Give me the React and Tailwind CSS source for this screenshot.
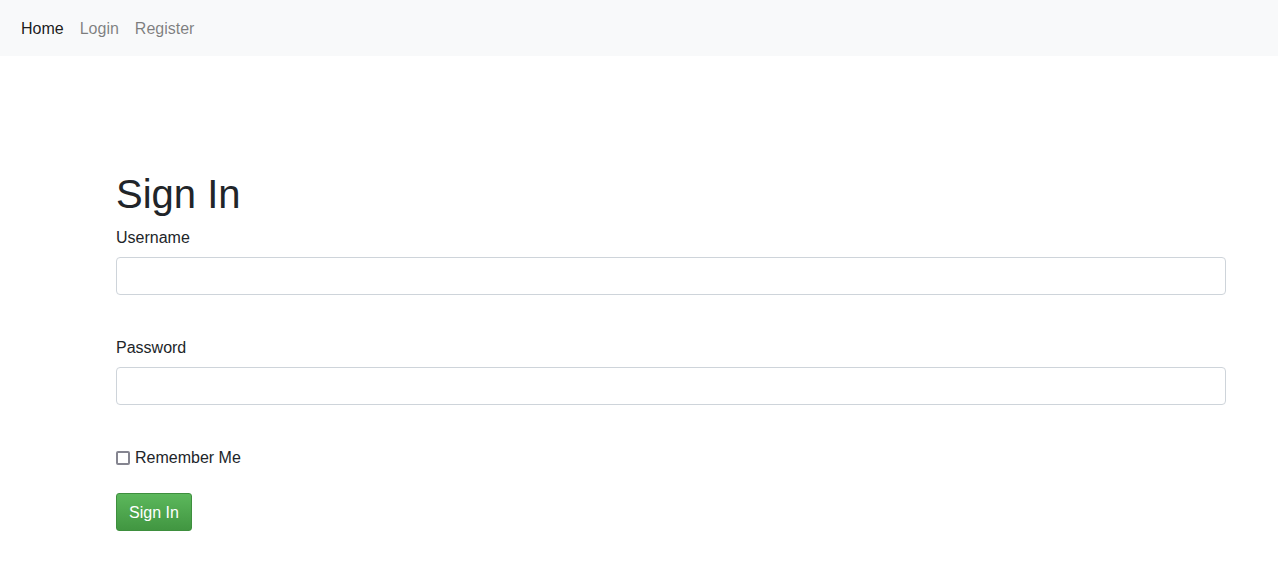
import React, { useState } from 'react';

const App = () => {
  const [username, setUsername] = useState('');
  const [password, setPassword] = useState('');
  const [remember, setRemember] = useState(false);

  return (
    <div className="min-h-screen bg-white text-[#212529] font-['Liberation_Sans',Arial,sans-serif]">
      <nav className="h-14 bg-[#f8f9fa] flex items-center px-4">
        <ul className="flex items-center pt-[2px]">
          <li><a href="#" className="block px-[5px] py-2 leading-6 text-base text-black/90">Home</a></li>
          <li><a href="#" className="block px-2 py-2 leading-6 text-base text-black/50 ml-[3px]">Login</a></li>
          <li><a href="#" className="block px-2 py-2 leading-6 text-base text-black/50">Register</a></li>
        </ul>
      </nav>

      <div className="pl-[116px] pr-[52px] pt-[114px]">
        <h1 className="text-[40px] leading-[48px] font-normal mb-[7px]">Sign In</h1>
        <form onSubmit={(e) => e.preventDefault()}>
          <div className="mb-10">
            <label className="block text-base leading-6 pt-px mb-[7px]">Username</label>
            <input
              type="text"
              value={username}
              onChange={(e) => setUsername(e.target.value)}
              className="block w-full h-[38px] px-3 border border-[#ced4da] rounded bg-white text-base outline-none"
            />
          </div>
          <div className="mb-10">
            <label className="block text-base leading-6 pt-px mb-[7px]">Password</label>
            <input
              type="password"
              value={password}
              onChange={(e) => setPassword(e.target.value)}
              className="block w-full h-[38px] px-3 border border-[#ced4da] rounded bg-white text-base outline-none"
            />
          </div>
          <div className="flex items-center h-6 mb-6">
            <input
              type="checkbox"
              checked={remember}
              onChange={(e) => setRemember(e.target.checked)}
              className="appearance-none m-0 w-[14px] h-[14px] mr-[5px] mt-[2px] border-2 border-[#858590] rounded-[2px] bg-white checked:bg-[#0075ff] checked:border-[#0075ff]"
            />
            <label className="text-base leading-6 pt-[2px]">Remember Me</label>
          </div>
          <button
            type="submit"
            className="h-[38px] px-[12px] pt-[2px] text-base text-white rounded-[3px] border border-[#3e8f3e] bg-gradient-to-b from-[#5cb85c] to-[#419641]"
          >
            Sign In
          </button>
        </form>
      </div>
    </div>
  );
};

export default App;
